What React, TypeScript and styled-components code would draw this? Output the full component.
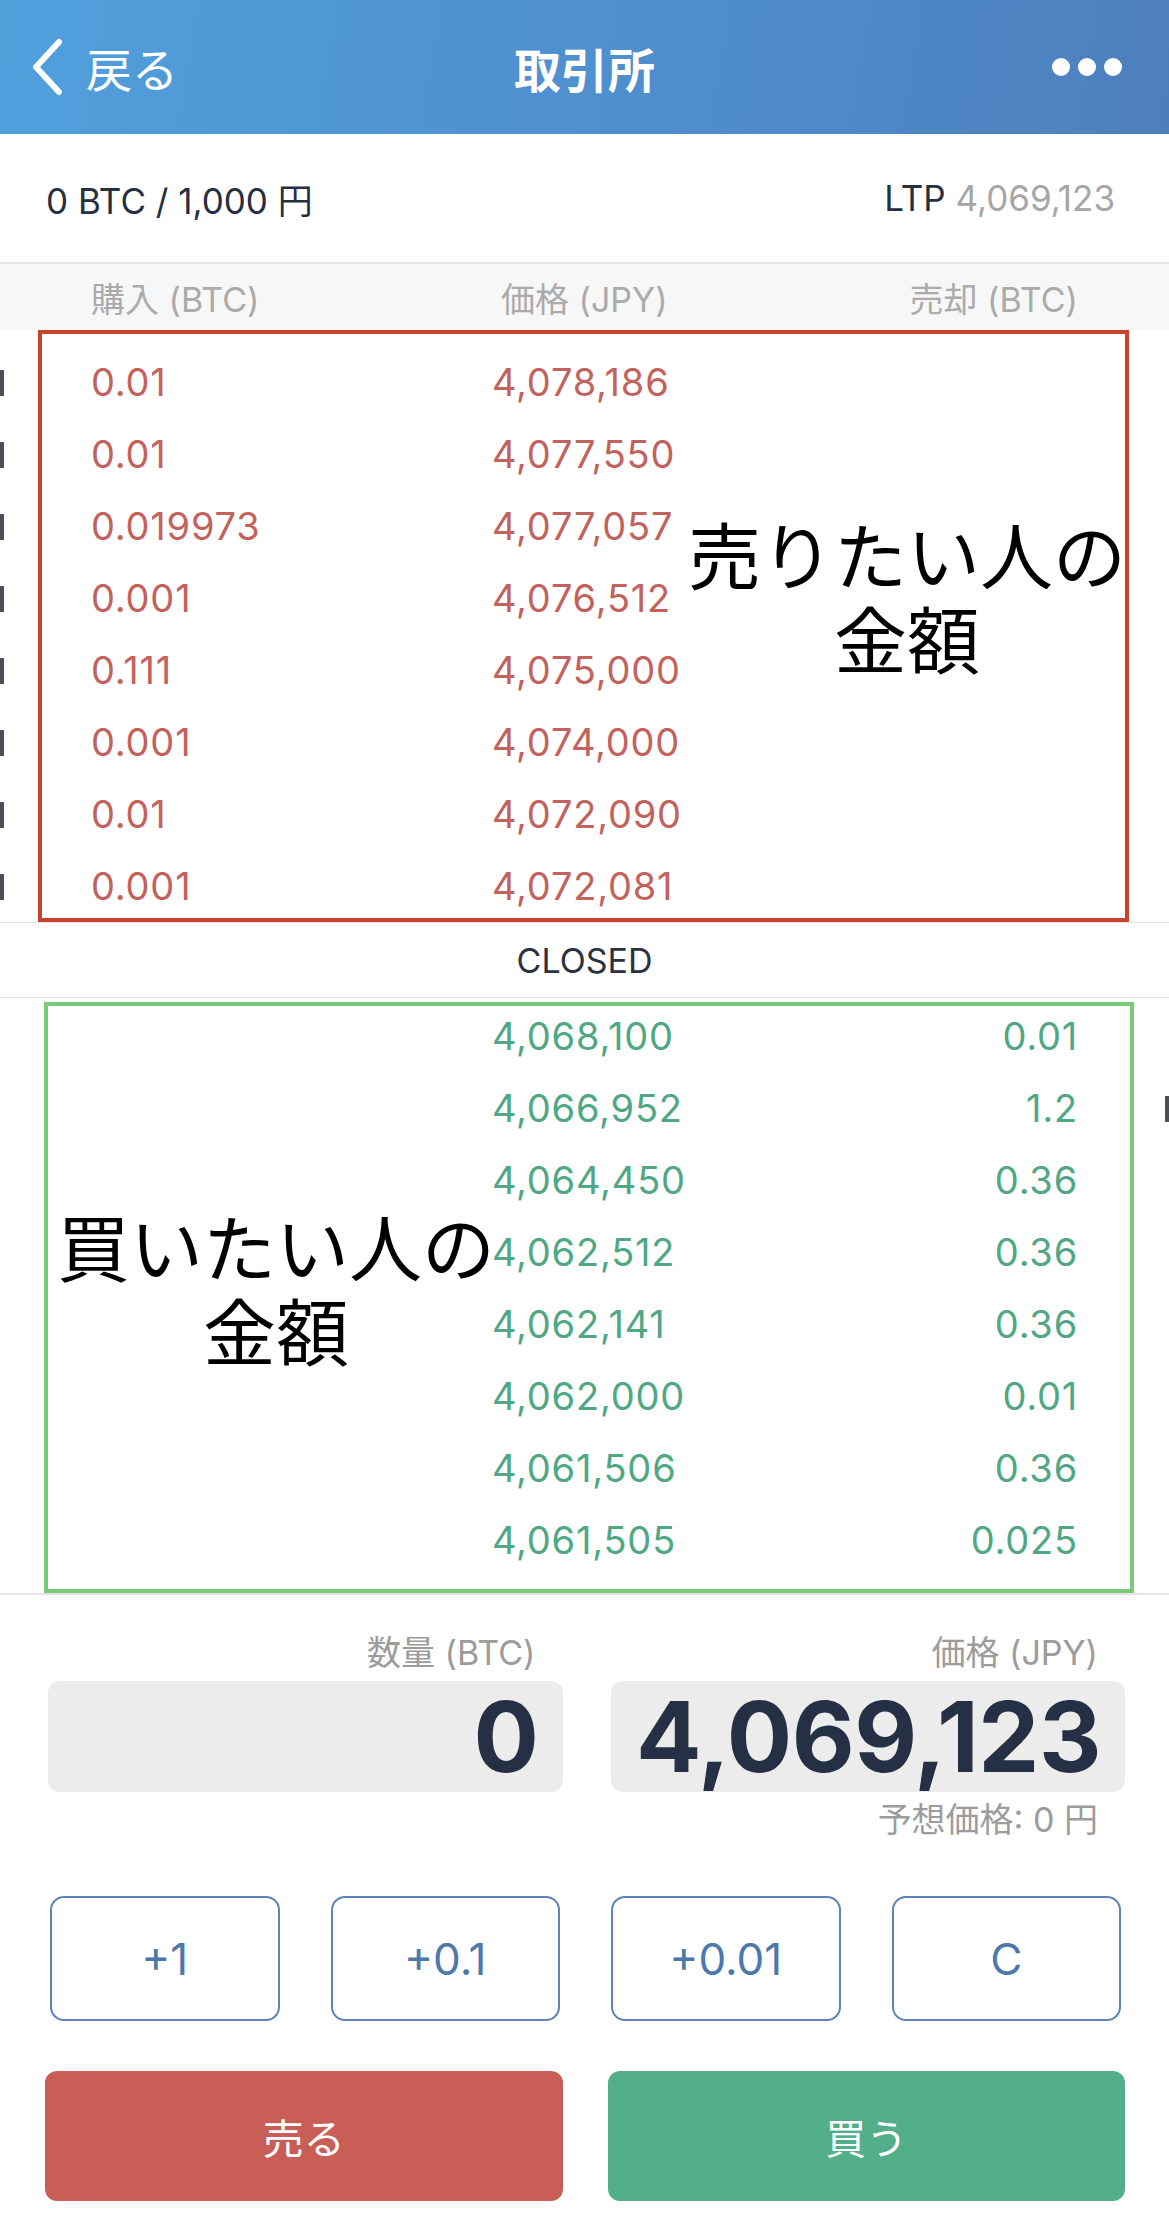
import styled, { createGlobalStyle } from "styled-components";

const GlobalStyle = createGlobalStyle`
  html, body {
    margin: 0;
    padding: 0;
    background: #ffffff;
  }
  body {
    font-family: Inter, "Noto Sans CJK JP", sans-serif;
    color: #262f3f;
  }
`;

const asks = [
  { qty: "0.01", price: "4,078,186" },
  { qty: "0.01", price: "4,077,550" },
  { qty: "0.019973", price: "4,077,057" },
  { qty: "0.001", price: "4,076,512" },
  { qty: "0.111", price: "4,075,000" },
  { qty: "0.001", price: "4,074,000" },
  { qty: "0.01", price: "4,072,090" },
  { qty: "0.001", price: "4,072,081" },
];

const bids = [
  { qty: "0.01", price: "4,068,100" },
  { qty: "1.2", price: "4,066,952", peek: true },
  { qty: "0.36", price: "4,064,450" },
  { qty: "0.36", price: "4,062,512" },
  { qty: "0.36", price: "4,062,141" },
  { qty: "0.01", price: "4,062,000" },
  { qty: "0.36", price: "4,061,506" },
  { qty: "0.025", price: "4,061,505" },
];

const Page = styled.div`
  width: 1169px;
  min-height: 2223px;
  display: flex;
  flex-direction: column;
`;

const Header = styled.header`
  height: 134px;
  display: grid;
  grid-template-columns: 1fr auto 1fr;
  align-items: center;
  padding: 0 30px;
  background: linear-gradient(100deg, #50a0dc 0%, #4f90cf 50%, #4e7fbd 100%);
  color: #ffffff;
`;

const Back = styled.div`
  display: flex;
  align-items: center;
  gap: 22px;
  font-size: 46px;
  font-family: "Noto Sans CJK JP", sans-serif;
  font-weight: 400;
`;

const Title = styled.h1`
  margin: 0;
  font-size: 47px;
  font-weight: 700;
  font-family: "Noto Sans CJK JP", sans-serif;
`;

const Dots = styled.div`
  justify-self: end;
  display: flex;
  gap: 8px;
  margin-right: 17px;
  span {
    width: 18px;
    height: 18px;
    border-radius: 50%;
    background: #ffffff;
  }
`;

const Balance = styled.div`
  height: 128px;
  display: flex;
  align-items: center;
  justify-content: space-between;
  padding: 0 54px 0 46px;
  font-size: 35px;
  border-bottom: 2px solid #e4e4e4;
`;

const Ltp = styled.div`
  span {
    color: #a6a6a6;
  }
`;

const RowGrid = styled.div`
  display: grid;
  grid-template-columns: 401px 1fr auto;
  align-items: center;
  padding: 0 91px;
`;

const ColumnHead = styled(RowGrid)`
  height: 66px;
  background: #f7f7f7;
  color: #ababab;
  font-size: 34px;
  span:nth-child(2) {
    padding-left: 9px;
  }
`;

const Book = styled.section<{ $top: number; $bottom: number }>`
  position: relative;
  padding: ${(p) => p.$top}px 0 ${(p) => p.$bottom}px;
`;

const Row = styled(RowGrid)<{ $side: "ask" | "bid" }>`
  position: relative;
  height: 72px;
  font-size: 38px;
  letter-spacing: 0.8px;
  color: ${(p) => (p.$side === "ask" ? "#c3625d" : "#4fa883")};
  span:last-of-type {
    text-align: right;
  }
`;

const Peek = styled.i<{ $right?: boolean }>`
  position: absolute;
  top: 24px;
  ${(p) => (p.$right ? "right: 0;" : "left: 0;")}
  width: 4px;
  height: 26px;
  background: #4a4f58;
`;

const Note = styled.div<{ $color: string; $l: number; $t: number; $r: number; $b: number }>`
  position: absolute;
  left: ${(p) => p.$l}px;
  top: ${(p) => p.$t}px;
  right: ${(p) => p.$r}px;
  bottom: ${(p) => p.$b}px;
  border: 4px solid ${(p) => p.$color};
  pointer-events: none;
`;

const NoteText = styled.div<{ $x: number; $y: number; $lh: number }>`
  position: absolute;
  left: ${(p) => p.$x}px;
  top: ${(p) => p.$y}px;
  width: 440px;
  text-align: center;
  font-family: "Noto Sans CJK JP", sans-serif;
  font-size: 73px;
  line-height: ${(p) => p.$lh}px;
  color: #000000;
  white-space: nowrap;
`;

const Closed = styled.div`
  height: 74px;
  display: flex;
  align-items: center;
  justify-content: center;
  font-size: 34px;
  color: #2a3142;
  border-top: 1px solid #e2e2e2;
  border-bottom: 1px solid #e2e2e2;
`;

const Divider = styled.hr`
  margin: 0;
  border: none;
  border-top: 2px solid #e4e4e4;
`;

const Order = styled.div`
  display: grid;
  grid-template-columns: 1fr 1fr;
  column-gap: 48px;
  padding: 38px 44px 0 48px;
`;

const Field = styled.div`
  display: flex;
  flex-direction: column;
  align-items: stretch;
`;

const Label = styled.div`
  text-align: right;
  padding-right: 27px;
  font-size: 34px;
  line-height: 40px;
  color: #9c9c9c;
`;

const ValueBox = styled.div`
  margin-top: 8px;
  height: 111px;
  border-radius: 12px;
  background: #ececec;
  display: flex;
  align-items: center;
  justify-content: flex-end;
  padding-right: 24px;
  font-size: 97px;
  font-weight: 700;
  letter-spacing: -0.5px;
  color: #253045;
`;

const Hint = styled(Label)`
  margin-top: 8px;
`;

const Steps = styled.div`
  display: grid;
  grid-template-columns: repeat(4, 1fr);
  gap: 51px;
  padding: 0 48px 0 50px;
  margin-top: 56px;
`;

const Step = styled.button`
  height: 125px;
  border: 2px solid #5d84b6;
  border-radius: 14px;
  background: #ffffff;
  color: #4d78ab;
  font-family: Inter, sans-serif;
  font-size: 44px;
`;

const Actions = styled.div`
  display: grid;
  grid-template-columns: 1fr 1fr;
  gap: 45px;
  padding: 0 44px 0 45px;
  margin-top: 50px;
`;

const Action = styled.button<{ $kind: "sell" | "buy" }>`
  height: 130px;
  border: none;
  border-radius: 12px;
  background: ${(p) => (p.$kind === "sell" ? "#c95e57" : "#53ae8a")};
  color: #ffffff;
  font-family: "Noto Sans CJK JP", sans-serif;
  font-size: 41px;
`;

export default function App() {
  return (
    <Page>
      <GlobalStyle />
      <Header>
        <Back>
          <svg width="34" height="58" viewBox="0 0 34 58">
            <path
              d="M29 4 L6 29 L29 54"
              fill="none"
              stroke="#ffffff"
              strokeWidth="6"
              strokeLinecap="round"
              strokeLinejoin="round"
            />
          </svg>
          戻る
        </Back>
        <Title>取引所</Title>
        <Dots>
          <span />
          <span />
          <span />
        </Dots>
      </Header>

      <Balance>
        <div>0 BTC / 1,000 円</div>
        <Ltp>
          LTP <span>4,069,123</span>
        </Ltp>
      </Balance>

      <ColumnHead>
        <span>購入 (BTC)</span>
        <span>価格 (JPY)</span>
        <span>売却 (BTC)</span>
      </ColumnHead>

      <Book $top={16} $bottom={0}>
        {asks.map((a, i) => (
          <Row $side="ask" key={i}>
            <Peek />
            <span>{a.qty}</span>
            <span>{a.price}</span>
            <span></span>
          </Row>
        ))}
        <Note $color="#c9442c" $l={38} $t={0} $r={40} $b={0}>
          <NoteText $x={645} $y={176} $lh={84}>
            売りたい人の
            <br />
            金額
          </NoteText>
        </Note>
      </Book>

      <Closed>CLOSED</Closed>

      <Book $top={2} $bottom={17}>
        {bids.map((b, i) => (
          <Row $side="bid" key={i}>
            {b.peek ? <Peek $right /> : null}
            <span></span>
            <span>{b.price}</span>
            <span>{b.qty}</span>
          </Row>
        ))}
        <Note $color="#7acb78" $l={44} $t={4} $r={35} $b={0}>
          <NoteText $x={8} $y={196} $lh={84}>
            買いたい人の
            <br />
            金額
          </NoteText>
        </Note>
      </Book>

      <Divider />

      <Order>
        <Field>
          <Label>数量 (BTC)</Label>
          <ValueBox>0</ValueBox>
        </Field>
        <Field>
          <Label>価格 (JPY)</Label>
          <ValueBox>4,069,123</ValueBox>
          <Hint>予想価格: 0 円</Hint>
        </Field>
      </Order>

      <Steps>
        <Step>+1</Step>
        <Step>+0.1</Step>
        <Step>+0.01</Step>
        <Step>C</Step>
      </Steps>

      <Actions>
        <Action $kind="sell">売る</Action>
        <Action $kind="buy">買う</Action>
      </Actions>
    </Page>
  );
}
